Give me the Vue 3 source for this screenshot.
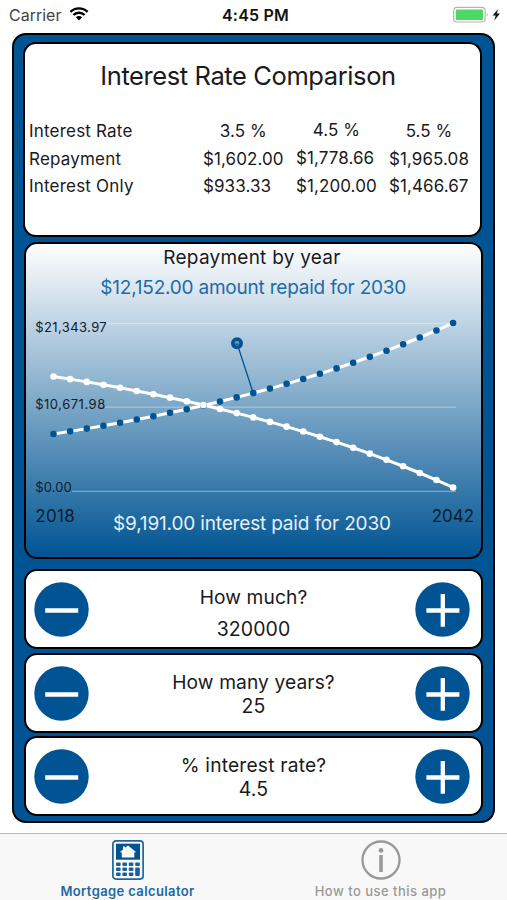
<script setup>
import { ref, computed } from 'vue'

const columns = [
  { rate: '3.5 %', repayment: '$1,602.00', interest: '$933.33', key: 'low' },
  { rate: '4.5 %', repayment: '$1,778.66', interest: '$1,200.00', key: 'mid' },
  { rate: '5.5 %', repayment: '$1,965.08', interest: '$1,466.67', key: 'high' },
]

const steppers = ref([
  { key: 'amount', label: 'How much?', value: 320000, step: 1000 },
  { key: 'years', label: 'How many years?', value: 25, step: 1 },
  { key: 'percent', label: '% interest rate?', value: 4.5, step: 0.5 },
])

// Capital repaid grows by the yearly factor; interest is the remainder of the payment.
const baseline = 491.5
const points = computed(() =>
  Array.from({ length: 25 }, (_, i) => {
    const repaid = 57.5 * Math.pow(1.0458, i)
    return { x: 53.5 + i * 16.65, repaid: baseline - repaid, interest: baseline - 172.5 + repaid }
  })
)
const line = (field) => points.value.map((p) => `${p.x},${p[field]}`).join(' ')
</script>

<template>
  <div class="screen">
    <header class="status">
      <div class="carrier">
        <span>Carrier</span>
        <svg width="20" height="14" viewBox="0 0 20 14">
          <path d="M1.4 4.9 A12.2 12.2 0 0 1 18.6 4.9" class="wave" />
          <path d="M4.4 8 A8 8 0 0 1 15.6 8" class="wave" />
          <path d="M10 13.4 L6.9 10.3 A4.4 4.4 0 0 1 13.1 10.3 Z" />
        </svg>
      </div>
      <span class="time">4:45 PM</span>
      <svg class="battery" width="50" height="18" viewBox="452 6 50 18">
        <rect x="453.7" y="7.4" width="31.4" height="14.6" rx="3.2" fill="#fff" stroke="#b4b4b6" stroke-width="1.2" />
        <rect x="455.8" y="9.6" width="27.3" height="10.3" rx="1.2" fill="#4cd964" />
        <path d="M486.8 12.5 q1.8 2.2 0 4.4z" fill="#a8a8aa" />
        <path d="M498.2 9 L492.6 15.4 L495.7 15.4 L494.3 20.6 L500 13.6 L496.8 13.6 Z" fill="#111" />
      </svg>
    </header>

    <main class="panel">
      <section class="card comparison">
        <h1>Interest Rate Comparison</h1>
        <div class="table">
          <div class="col names">
            <span>Interest Rate</span>
            <span>Repayment</span>
            <span>Interest Only</span>
          </div>
          <div v-for="c in columns" :key="c.key" class="col" :class="c.key">
            <span class="rate">{{ c.rate }}</span>
            <span>{{ c.repayment }}</span>
            <span>{{ c.interest }}</span>
          </div>
        </div>
      </section>

      <section class="card chart">
        <svg width="455" height="313" viewBox="26 244 455 313">
          <g class="grid">
            <line x1="107" y1="323.3" x2="456" y2="323.3" />
            <line x1="105" y1="407.2" x2="456" y2="407.2" />
            <line x1="72" y1="491.3" x2="456" y2="491.3" />
          </g>
          <g class="axis">
            <text x="35.2" y="332" textLength="71.5">$21,343.97</text>
            <text x="35.2" y="409" textLength="70">$10,671.98</text>
            <text x="35.2" y="492.3" textLength="36.5">$0.00</text>
          </g>
          <polyline :points="line('repaid')" class="series" />
          <polyline :points="line('interest')" class="series" />
          <circle v-for="p in points" :key="'r' + p.x" :cx="p.x" :cy="p.repaid" r="3.3" fill="#005493" />
          <circle v-for="p in points" :key="'i' + p.x" :cx="p.x" :cy="p.interest" r="3.3" fill="#fff" />
          <line x1="237" y1="343.3" x2="253.2" y2="393" stroke="#005493" stroke-width="1.3" />
          <circle cx="237" cy="343.3" r="4.2" fill="#6f9cc2" stroke="#005493" stroke-width="3.6" />
          <path d="M235.2 344.2 h3.6" stroke="#005493" stroke-width="1.2" />
          <text x="163.3" y="264.4" textLength="177" class="heading">Repayment by year</text>
          <text x="100.3" y="294.4" textLength="306" class="heading repaid">$12,152.00 amount repaid for 2030</text>
          <text x="113" y="530.4" textLength="278" class="heading interest">$9,191.00 interest paid for 2030</text>
          <text x="35.2" y="522.2" textLength="39.5" class="year">2018</text>
          <text x="431.7" y="522.2" textLength="42.5" class="year">2042</text>
        </svg>
      </section>

      <section v-for="s in steppers" :key="s.key" class="card stepper" :class="s.key">
        <button type="button" @click="s.value -= s.step">
          <svg width="55" height="55" viewBox="0 0 55 55">
            <circle cx="27.5" cy="27.5" r="27.2" />
            <path d="M11.2 28.5 H44.2" />
          </svg>
        </button>
        <div class="field">
          <span class="label">{{ s.label }}</span>
          <span class="value">{{ s.value }}</span>
        </div>
        <button type="button" @click="s.value += s.step">
          <svg width="55" height="55" viewBox="0 0 55 55">
            <circle cx="27.5" cy="27.5" r="27.2" />
            <path d="M11.4 28.5 H44.4 M27.8 12 V44.8" />
          </svg>
        </button>
      </section>
    </main>

    <nav class="tabs">
      <a class="tab active">
        <svg width="32" height="40" viewBox="0 0 32 40">
          <rect x="0.9" y="0.9" width="30.2" height="38.2" rx="3" fill="#f8f8f8" stroke="#1c659f" stroke-width="1.7" />
          <rect x="4" y="3.7" width="24" height="16" fill="#005493" />
          <path d="M16 5.6 L24.2 12.2 H22.3 V17.6 H9.8 V12.2 H7.8 L11 9.5 V6.6 H13.2 V7.8 Z" fill="#fff" />
          <g fill="#1c5f98">
            <rect x="4" y="22.6" width="4.6" height="3.3" rx="1" />
            <rect x="10.4" y="22.6" width="4.6" height="3.3" rx="1" />
            <rect x="16.8" y="22.6" width="4.6" height="3.3" rx="1" />
            <rect x="23.2" y="22.6" width="4.6" height="3.3" rx="1" />
            <rect x="4" y="27.6" width="4.6" height="3.3" rx="1" />
            <rect x="10.4" y="27.6" width="4.6" height="3.3" rx="1" />
            <rect x="16.8" y="27.6" width="4.6" height="3.3" rx="1" />
            <rect x="4" y="32.6" width="4.6" height="3.3" rx="1" />
            <rect x="10.4" y="32.6" width="4.6" height="3.3" rx="1" />
            <rect x="16.8" y="32.6" width="4.6" height="3.3" rx="1" />
            <rect x="23.2" y="27.6" width="4.6" height="8.3" rx="1" />
          </g>
        </svg>
        <span>Mortgage calculator</span>
      </a>
      <a class="tab">
        <svg width="40" height="40" viewBox="0 0 40 40">
          <circle cx="20" cy="20" r="18.5" fill="none" stroke="#999" stroke-width="2.3" />
          <circle cx="20" cy="10.4" r="2.4" fill="#999" />
          <path d="M20 15 V32" stroke="#999" stroke-width="3.6" />
        </svg>
        <span>How to use this app</span>
      </a>
    </nav>
  </div>
</template>

<style>
body {
  background: #fff;
}
</style>

<style scoped>
.screen {
  width: 507px;
  height: 900px;
  overflow: hidden;
  display: flex;
  flex-direction: column;
  background: #fff;
  color: #1a1a1a;
  font-family: Inter, "Liberation Sans", sans-serif;
}
.status {
  height: 33px;
  flex: none;
  display: grid;
  grid-template-columns: 1fr auto 1fr;
  box-sizing: border-box;
  padding: 6px 5px 0 9px;
  font-size: 16px;
  line-height: 18px;
}
.carrier {
  display: flex;
  gap: 8px;
  color: #444;
}
.carrier svg {
  margin-top: 1px;
}
.wave {
  fill: none;
  stroke: #000;
  stroke-width: 2.4;
}
.time {
  font-weight: 600;
  letter-spacing: 0.2px;
  color: #111;
}
.battery {
  justify-self: end;
}
.panel {
  flex: none;
  box-sizing: border-box;
  width: 483px;
  height: 790px;
  margin-left: 12px;
  padding: 7px 10px 0 10px;
  border: 2px solid #000;
  border-radius: 14px;
  background: #005493;
}
.card {
  box-sizing: border-box;
  width: 459px;
  border: 2px solid #000;
  border-radius: 13px;
  background: #fff;
  overflow: hidden;
}
.comparison {
  height: 195px;
  margin-left: -1px;
}
h1 {
  margin: 15px 0 0;
  padding-right: 9px;
  text-align: center;
  font-size: 25.5px;
  line-height: 34px;
  font-weight: 400;
  letter-spacing: -0.4px;
}
.table {
  display: grid;
  grid-template-columns: 174px 93px 93px 84px;
  padding: 28px 0 0 4px;
  font-size: 17px;
  line-height: 20px;
}
.col {
  display: flex;
  flex-direction: column;
  gap: 7.5px;
  width: max-content;
  letter-spacing: 0.08px;
}
.names {
  letter-spacing: 0.2px;
}
.rate {
  align-self: center;
}
.mid {
  margin-top: -1px;
  gap: 8px;
}
.chart {
  height: 317px;
  margin-top: 5px;
  background: linear-gradient(#fff, #005493);
}
.chart svg {
  display: block;
}
.grid line {
  stroke: rgba(255, 255, 255, 0.35);
  stroke-width: 1.3;
}
.axis text {
  font-size: 13px;
  fill: #10202e;
}
.series {
  fill: none;
  stroke: #fff;
  stroke-width: 3;
}
.heading {
  font-size: 19px;
  fill: #1a1a1a;
}
.heading.repaid {
  fill: #1f6aa8;
}
.heading.interest {
  fill: #e4f0fa;
}
.year {
  font-size: 17px;
  fill: #0a1c2c;
}
.stepper {
  height: 80px;
  margin-top: 4px;
  padding: 0 11px 0 8px;
  display: flex;
  align-items: center;
  justify-content: space-between;
}
.stepper.amount {
  margin-top: 10px;
}
.stepper.percent {
  margin-top: 3px;
  padding-top: 1px;
}
button {
  padding: 0;
  border: 0;
  background: none;
  height: 55px;
}
button svg {
  display: block;
}
button circle {
  fill: #005493;
}
button path {
  fill: none;
  stroke: #fff;
  stroke-width: 4.3;
}
.field {
  display: flex;
  flex-direction: column;
  align-items: center;
  padding: 2px 0 0 3px;
  font-size: 19.2px;
  line-height: 24px;
  letter-spacing: 0.1px;
}
.percent .field {
  padding-top: 0;
  letter-spacing: 0.2px;
}
.amount .field {
  gap: 8px;
  padding-top: 8px;
}
.value {
  font-size: 19.5px;
}
.tabs {
  flex: none;
  margin-top: 10px;
  height: 67px;
  box-sizing: border-box;
  border-top: 1px solid #bbb;
  background: #f8f8f8;
  display: grid;
  grid-template-columns: 1fr 1fr;
  padding-left: 1px;
}
.tab {
  display: flex;
  flex-direction: column;
  align-items: center;
  padding-top: 6px;
  font-size: 13px;
  line-height: 16px;
  font-weight: 500;
  letter-spacing: 0.48px;
  color: #999;
  gap: 3px;
}
.tab.active {
  color: #2068a3;
  font-weight: 600;
  letter-spacing: 0.38px;
}
</style>
